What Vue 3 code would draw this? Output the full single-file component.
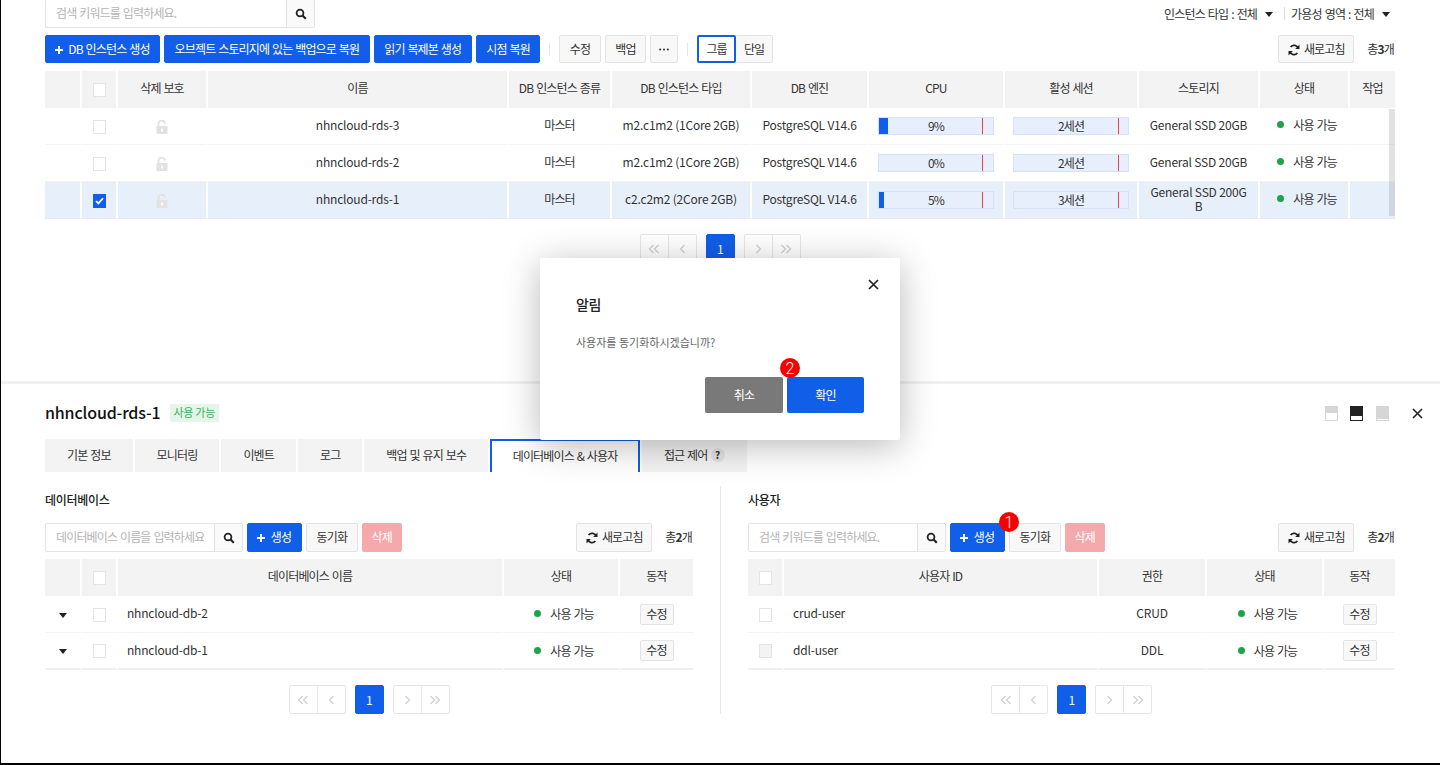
<script setup>
const topColumns = [
  { label: '', width: 37 },
  { label: '', width: 36, check: true },
  { label: '삭제 보호', width: 90 },
  { label: '이름', width: 301 },
  { label: 'DB 인스턴스 종류', width: 103 },
  { label: 'DB 인스턴스 타입', width: 140 },
  { label: 'DB 엔진', width: 117 },
  { label: 'CPU', width: 136 },
  { label: '활성 세션', width: 134 },
  { label: '스토리지', width: 121 },
  { label: '상태', width: 90 },
  { label: '작업', width: 45 },
]

const instances = [
  { name: 'nhncloud-rds-3', kind: '마스터', type: 'm2.c1m2 (1Core 2GB)', cpu: 9, sessions: '2세션', storage: 'General SSD 20GB' },
  { name: 'nhncloud-rds-2', kind: '마스터', type: 'm2.c1m2 (1Core 2GB)', cpu: 0, sessions: '2세션', storage: 'General SSD 20GB' },
  { name: 'nhncloud-rds-1', kind: '마스터', type: 'c2.c2m2 (2Core 2GB)', cpu: 5, sessions: '3세션', storage: 'General SSD 200GB', selected: true },
]

const tabs = ['기본 정보', '모니터링', '이벤트', '로그', '백업 및 유지 보수', '데이터베이스 & 사용자', '접근 제어']

const panels = [
  {
    title: '데이터베이스',
    placeholder: '데이터베이스 이름을 입력하세요.',
    expandable: true,
    columns: [
      { label: '', width: 37 },
      { label: '', width: 36, check: true },
      { label: '데이터베이스 이름', width: 386 },
      { label: '상태', width: 116 },
      { label: '동작', width: 73 },
    ],
    rows: [{ name: 'nhncloud-db-2' }, { name: 'nhncloud-db-1' }],
  },
  {
    title: '사용자',
    placeholder: '검색 키워드를 입력하세요.',
    expandable: false,
    columns: [
      { label: '', width: 36, check: true },
      { label: '사용자 ID', width: 315 },
      { label: '권한', width: 108 },
      { label: '상태', width: 117 },
      { label: '동작', width: 71 },
    ],
    rows: [
      { name: 'crud-user', perm: 'CRUD' },
      { name: 'ddl-user', perm: 'DDL', disabled: true },
    ],
  },
]
</script>

<template>
  <div class="page">
    <section class="top">
      <div class="filter-row">
        <div class="search search--top">
          <input class="search-input" placeholder="검색 키워드를 입력하세요." />
          <button class="search-btn">
            <svg width="12" height="12" viewBox="0 0 12 12"><circle cx="5" cy="5" r="3.4" fill="none" stroke="#222" stroke-width="1.8"/><path d="M7.5 7.5L10.8 10.8" stroke="#222" stroke-width="2.2"/></svg>
          </button>
        </div>
        <div class="filters">
          <span>인스턴스 타입 : 전체</span><i class="caret caret--filter"></i>
          <b class="filter-sep"></b>
          <span>가용성 영역 : 전체</span><i class="caret caret--filter"></i>
        </div>
      </div>

      <div class="toolbar">
        <button class="btn btn--blue btn--create">
          <svg width="8" height="8" viewBox="0 0 8 8"><path d="M4 0v8M0 4h8" stroke="#fff" stroke-width="2"/></svg>
          DB 인스턴스 생성
        </button>
        <button class="btn btn--blue">오브젝트 스토리지에 있는 백업으로 복원</button>
        <button class="btn btn--blue">읽기 복제본 생성</button>
        <button class="btn btn--blue">시점 복원</button>
        <b class="sep"></b>
        <button class="btn">수정</button>
        <button class="btn">백업</button>
        <button class="btn btn--more">
          <svg width="10" height="3" viewBox="0 0 10 3" fill="#333"><circle cx="1.2" cy="1.5" r="1"/><circle cx="5" cy="1.5" r="1"/><circle cx="8.8" cy="1.5" r="1"/></svg>
        </button>
        <b class="sep"></b>
        <div class="toggle">
          <button class="btn btn--on">그룹</button>
          <button class="btn btn--off">단일</button>
        </div>
        <div class="toolbar-end">
          <button class="btn btn--refresh">
            <svg class="refresh-icon" width="12" height="12" viewBox="0 0 12 12"><path d="M10.3 4.4A4.5 4.5 0 0 0 2.6 3M1.7 7.6A4.5 4.5 0 0 0 9.4 9" fill="none" stroke="#222" stroke-width="1.7"/><path d="M11.5 0.6V5H7.1zM0.5 11.4V7h4.4z" fill="#222"/></svg>
            새로고침
          </button>
          <span class="total">총<b>3</b>개</span>
        </div>
      </div>

      <div class="table-wrap">
        <table class="grid">
          <colgroup>
            <col v-for="(c, i) in topColumns" :key="i" :style="{ width: c.width + 'px' }" />
          </colgroup>
          <thead>
            <tr>
              <th v-for="(c, i) in topColumns" :key="i" :class="{ ctl: c.check }">
                <span v-if="c.check" class="check"></span>
                <template v-else>{{ c.label }}</template>
              </th>
            </tr>
          </thead>
          <tbody>
            <tr v-for="row in instances" :key="row.name" :class="{ selected: row.selected }">
              <td></td>
              <td class="ctl">
                <span class="check" :class="{ 'check--on': row.selected }">
                  <svg v-if="row.selected" width="9" height="8" viewBox="0 0 9 8"><path d="M1 4l2.4 2.4L8 1.2" fill="none" stroke="#fff" stroke-width="1.7"/></svg>
                </span>
              </td>
              <td class="ctl">
                <svg class="lock" width="12" height="14" viewBox="0 0 12 14"><path d="M2.5 6.5V3.7a3.2 3.2 0 0 1 6.4 0" fill="none" stroke="#e2e2e2" stroke-width="1.8"/><rect x="0.5" y="6" width="11" height="8" rx="0.8" fill="#e2e2e2"/><rect x="5.2" y="8.6" width="1.6" height="3" fill="#fff"/></svg>
              </td>
              <td class="latin">{{ row.name }}</td>
              <td>{{ row.kind }}</td>
              <td class="latin">{{ row.type }}</td>
              <td class="latin">PostgreSQL V14.6</td>
              <td class="bar-cell ctl">
                <div class="bar">
                  <div class="bar-fill" :style="{ width: row.cpu + '%' }"></div>
                  <div class="bar-limit"></div>
                  <span class="bar-text">{{ row.cpu }}%</span>
                </div>
              </td>
              <td class="bar-cell ctl">
                <div class="bar">
                  <div class="bar-limit"></div>
                  <span class="bar-text">{{ row.sessions }}</span>
                </div>
              </td>
              <td class="storage latin">{{ row.storage }}</td>
              <td class="status-cell">
                <span class="status"><i class="dot"></i>사용 가능</span>
              </td>
              <td></td>
            </tr>
          </tbody>
        </table>
        <div class="scrollbar"></div>
      </div>

      <div class="pager pager--top">
        <div class="pager-group">
          <button><svg width="12" height="10" viewBox="0 0 12 10"><path d="M5.5 1L1.5 5l4 4M10.5 1l-4 4 4 4" fill="none" stroke="#cfcfcf" stroke-width="1.2"/></svg></button>
          <button><svg width="7" height="10" viewBox="0 0 7 10"><path d="M5.5 1L1.5 5l4 4" fill="none" stroke="#cfcfcf" stroke-width="1.2"/></svg></button>
        </div>
        <button class="pager-current">1</button>
        <div class="pager-group">
          <button><svg width="7" height="10" viewBox="0 0 7 10"><path d="M1.5 1l4 4-4 4" fill="none" stroke="#cfcfcf" stroke-width="1.2"/></svg></button>
          <button><svg width="12" height="10" viewBox="0 0 12 10"><path d="M1.5 1l4 4-4 4M6.5 1l4 4-4 4" fill="none" stroke="#cfcfcf" stroke-width="1.2"/></svg></button>
        </div>
      </div>
    </section>

    <section class="detail">
      <header class="detail-head">
        <h2 class="detail-title">nhncloud-rds-1</h2>
        <span class="badge">사용 가능</span>
        <div class="detail-tools">
          <span class="layout-icon"><i style="height: 7px"></i></span>
          <span class="layout-icon layout-icon--on"><i style="height: 4px"></i></span>
          <span class="layout-icon"><i style="height: 1px"></i></span>
          <svg class="detail-close" width="11" height="11" viewBox="0 0 11 11"><path d="M1 1l9 9M10 1l-9 9" stroke="#222" stroke-width="1.6"/></svg>
        </div>
      </header>

      <nav class="tabs">
        <button v-for="t in tabs" :key="t" class="tab" :class="{ 'tab--on': t === '데이터베이스 & 사용자' }">
          {{ t }}
          <span v-if="t === '접근 제어'" class="help">?</span>
        </button>
      </nav>

      <div class="panels">
        <div v-for="(p, pi) in panels" :key="p.title" class="panel">
          <h3 class="panel-title">{{ p.title }}</h3>
          <div class="toolbar toolbar--panel">
            <div class="search search--panel">
              <input class="search-input" :placeholder="p.placeholder" />
              <button class="search-btn">
                <svg width="12" height="12" viewBox="0 0 12 12"><circle cx="5" cy="5" r="3.4" fill="none" stroke="#222" stroke-width="1.8"/><path d="M7.5 7.5L10.8 10.8" stroke="#222" stroke-width="2.2"/></svg>
              </button>
            </div>
            <button class="btn btn--blue btn--create btn--small">
              <svg width="8" height="8" viewBox="0 0 8 8"><path d="M4 0v8M0 4h8" stroke="#fff" stroke-width="2"/></svg>
              생성
              <span v-if="pi === 1" class="step step--one">1</span>
            </button>
            <button class="btn">동기화</button>
            <button class="btn btn--danger">삭제</button>
            <div class="toolbar-end">
              <button class="btn btn--refresh">
                <svg class="refresh-icon" width="12" height="12" viewBox="0 0 12 12"><path d="M10.3 4.4A4.5 4.5 0 0 0 2.6 3M1.7 7.6A4.5 4.5 0 0 0 9.4 9" fill="none" stroke="#222" stroke-width="1.7"/><path d="M11.5 0.6V5H7.1zM0.5 11.4V7h4.4z" fill="#222"/></svg>
                새로고침
              </button>
              <span class="total">총<b>2</b>개</span>
            </div>
          </div>

          <table class="grid grid--panel">
            <colgroup>
              <col v-for="(c, i) in p.columns" :key="i" :style="{ width: c.width + 'px' }" />
            </colgroup>
            <thead>
              <tr>
                <th v-for="(c, i) in p.columns" :key="i" :class="{ ctl: c.check }">
                  <span v-if="c.check" class="check"></span>
                  <template v-else>{{ c.label }}</template>
                </th>
              </tr>
            </thead>
            <tbody>
              <tr v-for="row in p.rows" :key="row.name">
                <td v-if="p.expandable" class="ctl"><i class="caret caret--row"></i></td>
                <td class="ctl"><span class="check" :class="{ 'check--off': row.disabled }"></span></td>
                <td class="left latin">{{ row.name }}</td>
                <td v-if="!p.expandable" class="latin">{{ row.perm }}</td>
                <td><span class="status"><i class="dot"></i>사용 가능</span></td>
                <td class="ctl"><button class="btn btn--edit">수정</button></td>
              </tr>
            </tbody>
          </table>

          <div class="pager">
            <div class="pager-group">
              <button><svg width="12" height="10" viewBox="0 0 12 10"><path d="M5.5 1L1.5 5l4 4M10.5 1l-4 4 4 4" fill="none" stroke="#cfcfcf" stroke-width="1.2"/></svg></button>
              <button><svg width="7" height="10" viewBox="0 0 7 10"><path d="M5.5 1L1.5 5l4 4" fill="none" stroke="#cfcfcf" stroke-width="1.2"/></svg></button>
            </div>
            <button class="pager-current">1</button>
            <div class="pager-group">
              <button><svg width="7" height="10" viewBox="0 0 7 10"><path d="M1.5 1l4 4-4 4" fill="none" stroke="#cfcfcf" stroke-width="1.2"/></svg></button>
              <button><svg width="12" height="10" viewBox="0 0 12 10"><path d="M1.5 1l4 4-4 4M6.5 1l4 4-4 4" fill="none" stroke="#cfcfcf" stroke-width="1.2"/></svg></button>
            </div>
          </div>
        </div>
      </div>
    </section>

    <div class="modal">
      <svg class="modal-close" width="11" height="11" viewBox="0 0 11 11"><path d="M1 1l9 9M10 1l-9 9" stroke="#222" stroke-width="1.7"/></svg>
      <h4 class="modal-title">알림</h4>
      <p class="modal-text">사용자를 동기화하시겠습니까?</p>
      <div class="modal-actions">
        <button class="modal-btn modal-btn--cancel">취소</button>
        <button class="modal-btn modal-btn--ok">
          확인
          <span class="step step--two">2</span>
        </button>
      </div>
    </div>
  </div>
</template>

<style scoped>
.page {
  position: relative;
  box-sizing: border-box;
  height: 765px;
  overflow: hidden;
  border-left: 1px solid #000;
  border-bottom: 2px solid #000;
  background: #fff;
  color: #333;
  font-family: "Noto Sans CJK KR", sans-serif;
  font-size: 12px;
  letter-spacing: -0.85px;
  word-spacing: 1px;
}
button {
  font-family: inherit;
  letter-spacing: inherit;
  word-spacing: inherit;
  cursor: pointer;
}

/* top list */
.top {
  box-sizing: border-box;
  height: 381px;
  padding: 0 45px 0 44px;
  margin-bottom: 3px;
}
.filter-row {
  display: flex;
  justify-content: space-between;
  height: 27px;
}
.search {
  display: flex;
  box-sizing: border-box;
  height: 29px;
  border: 1px solid #e3e3e3;
  border-radius: 2px;
  background: #fff;
}
.search--top {
  width: 270px;
  margin-top: -1px;
}
.search--panel {
  width: 198px;
}
.search-input {
  flex: 1;
  min-width: 0;
  box-sizing: border-box;
  border: 0;
  outline: 0;
  padding: 0 10px 2px;
  font-family: inherit;
  font-size: 12px;
  letter-spacing: inherit;
  word-spacing: inherit;
  background: transparent;
}
.search-input::placeholder {
  color: #b4b4b4;
}
.search-btn {
  width: 28px;
  flex: none;
  padding: 0;
  border: 0;
  border-left: 1px solid #e3e3e3;
  background: #fafafa;
  display: flex;
  align-items: center;
  justify-content: center;
}
.filters {
  display: flex;
  align-items: center;
  height: 26px;
  margin-right: 5px;
  letter-spacing: -0.8px;
  color: #333;
}
.filter-sep {
  width: 1px;
  height: 13px;
  margin: 0 6px 0 11px;
  background: #ddd;
}
.caret {
  display: inline-block;
  width: 0;
  height: 0;
  border-left: 4px solid transparent;
  border-right: 4px solid transparent;
  border-top: 5px solid #222;
}
.caret--filter {
  margin-left: 8px;
  margin-top: 2px;
}
.caret--row {
  position: relative;
  top: -1px;
  vertical-align: middle;
}

.toolbar {
  display: flex;
  align-items: center;
  gap: 4px;
  height: 28px;
  margin-top: 8px;
}
.toolbar--panel {
  height: 29px;
  margin-top: 0;
}
.toolbar-end {
  margin-left: auto;
  display: flex;
  align-items: center;
  gap: 13px;
  height: 100%;
}
.btn {
  box-sizing: border-box;
  height: 100%;
  padding: 0 9.5px 2px;
  border: 1px solid #e3e3e3;
  border-radius: 2px;
  background: #f8f8f8;
  color: #333;
  font-size: 12px;
  white-space: nowrap;
  position: relative;
}
.btn--blue {
  border-color: #115ee8;
  background: #115ee8;
  color: #fff;
}
.btn--create svg {
  margin-right: 3px;
  margin-left: -1px;
}
.btn--small {
  width: 55px;
  padding: 0 0 2px;
}
.btn--danger {
  border-color: #f4a9ad;
  background: #f4a9ad;
  color: #fff;
  padding: 0 9px 2px;
}
.btn--more {
  display: inline-flex;
  align-items: center;
  justify-content: center;
  width: 28px;
  padding: 0;
}
.btn--refresh {
  width: 76px;
  padding: 0 0 2px;
}
.refresh-icon {
  vertical-align: -2px;
  margin-right: 1px;
}
.sep {
  width: 1px;
  height: 13px;
  margin: 0 5px;
  background: #e4e4e4;
}
.toggle {
  display: flex;
  height: 100%;
}
.btn--on {
  width: 39px;
  padding: 0 0 2px;
  border: 2px solid #115ee8;
  background: #fff;
}
.btn--off {
  width: 37px;
  padding: 0 0 2px;
  border-left: 0;
}
.total {
  white-space: nowrap;
  padding: 0 1px 2px 0;
  color: #333;
}
.total b {
  font-weight: 700;
}

/* tables */
.table-wrap {
  position: relative;
  margin-top: 8px;
}
.grid {
  width: 100%;
  table-layout: fixed;
  border-collapse: separate;
  border-spacing: 0;
}
.grid th,
.grid td {
  box-sizing: border-box;
  height: 37px;
  padding: 0 0 3px;
  font-weight: 400;
  text-align: center;
  border-right: 2px solid #fff;
}
.grid th {
  padding-bottom: 4px;
  background: #f3f3f3;
}
.grid td {
  border-bottom: 1px solid #f3f3f3;
}
.grid th:last-child,
.grid td:last-child {
  border-right: 0;
}
.grid .ctl {
  padding: 0;
}
.grid .latin {
  letter-spacing: -0.2px;
  word-spacing: 0;
}
.grid tr.selected td {
  background: #e7effb;
  border-bottom-color: #e4e9f2;
}
.grid--panel tbody tr:last-child td {
  border-bottom: 2px solid #f0f0f0;
}
.grid td.left {
  text-align: left;
  padding-left: 9px;
}
.check {
  position: relative;
  top: -1px;
  display: inline-flex;
  align-items: center;
  justify-content: center;
  box-sizing: border-box;
  width: 13px;
  height: 14px;
  vertical-align: middle;
  border: 1px solid #e4e4e4;
  background: #fff;
}
.check--on {
  border-color: #115ee8;
  background: #115ee8;
}
.check--off {
  background: #f3f3f3;
}
.lock {
  vertical-align: middle;
  margin-top: -3px;
}
.grid .bar-cell {
  padding: 0 9px;
}
.grid .bar-cell + .bar-cell {
  padding: 0 8px;
}
.bar {
  position: relative;
  box-sizing: border-box;
  height: 18px;
  line-height: 15px;
  border: 1px solid #d3e1fb;
  background: #e7effc;
  overflow: hidden;
}
.bar-fill {
  position: absolute;
  left: -1px;
  top: -1px;
  bottom: -1px;
  background: #115ee8;
}
.bar-limit {
  position: absolute;
  right: 10px;
  top: -1px;
  bottom: -1px;
  width: 1px;
  background: #e8424a;
}
.bar-cell + .bar-cell .bar-limit {
  right: 9px;
}
.bar-text {
  position: relative;
  display: block;
}
.grid .storage {
  padding: 0 9px 2px;
  line-height: 14px;
  word-break: break-all;
}
.grid .status-cell {
  padding-bottom: 6px;
}
.status {
  display: inline-flex;
  align-items: center;
  margin-left: 6px;
  white-space: nowrap;
}
.dot {
  width: 7px;
  height: 7px;
  margin-right: 9px;
  border-radius: 50%;
  background: #1fa24a;
}
.btn--edit {
  width: 34px;
  height: 21px;
  padding: 0 0 2px;
  vertical-align: middle;
}
.scrollbar {
  position: absolute;
  right: 0;
  top: 38px;
  width: 6px;
  height: 107px;
  background: rgba(150, 150, 150, 0.28);
}

/* pagination */
.pager {
  display: flex;
  justify-content: center;
  gap: 9px;
  height: 29px;
  margin-top: 15px;
}
.pager button {
  box-sizing: border-box;
  width: 29px;
  height: 100%;
  padding: 0;
  border: 1px solid #e6e6e6;
  background: #fff;
  display: flex;
  align-items: center;
  justify-content: center;
}
.pager-group {
  display: flex;
}
.pager-group button:first-child {
  border-radius: 2px 0 0 2px;
}
.pager-group button:last-child {
  margin-left: -1px;
  border-radius: 0 2px 2px 0;
}
.pager .pager-current {
  border-color: #115ee8;
  border-radius: 2px;
  background: #115ee8;
  color: #fff;
  font-size: 12px;
}

/* detail */
.detail {
  box-sizing: border-box;
  border-top: 3px solid #f0f0f0;
  margin-top: -3px;
  padding: 20px 45px 0 44px;
}
.detail-head {
  display: flex;
  align-items: center;
  height: 18px;
}
.detail-title {
  margin: 0 0 2px;
  font-size: 16px;
  font-weight: 500;
  letter-spacing: -0.15px;
  color: #111;
}
.badge {
  margin-left: 9px;
  padding: 0 4px;
  height: 18px;
  line-height: 16px;
  font-size: 11px;
  letter-spacing: -0.3px;
  word-spacing: 0;
  color: #3bb15c;
  background: #e5f5e9;
}
.detail-tools {
  display: flex;
  align-items: center;
  gap: 12.5px;
  margin-left: auto;
  margin-right: -28px;
}
.layout-icon {
  display: flex;
  align-items: flex-end;
  box-sizing: border-box;
  width: 13px;
  height: 15px;
  padding: 1px;
  background: #d6d6d6;
}
.layout-icon i {
  display: block;
  width: 100%;
  background: #fff;
}
.layout-icon--on {
  background: #222;
}
.detail-close {
  margin-left: 11px;
}
.tabs {
  display: flex;
  gap: 2px;
  height: 33px;
  margin-top: 17px;
}
.tab {
  box-sizing: border-box;
  height: 100%;
  padding: 0 22px 2px;
  border: 0;
  background: #f3f3f3;
  color: #333;
  font-size: 12px;
  white-space: nowrap;
  display: flex;
  align-items: center;
}
.tab--on {
  padding: 0 20.5px 2px;
  border: 2px solid #115ee8;
  border-bottom: 0;
  background: #fff;
}
.help {
  display: inline-flex;
  align-items: center;
  justify-content: center;
  width: 14px;
  height: 14px;
  margin-left: 3px;
  border-radius: 50%;
  background: #e4e4e4;
  font-size: 10px;
  font-weight: 700;
  letter-spacing: 0;
}
.panels {
  display: grid;
  grid-template-columns: 648px 647px;
  column-gap: 55px;
  margin-top: 14px;
  position: relative;
}
.panels::before {
  content: "";
  position: absolute;
  left: 675px;
  top: 0;
  bottom: 0;
  width: 1px;
  background: #e8e8e8;
}
.panel-title {
  margin: 0;
  height: 37px;
  line-height: 28px;
  font-size: 12px;
  font-weight: 500;
  letter-spacing: -0.3px;
  color: #222;
}
.grid--panel {
  margin-top: 7px;
}

/* confirm dialog */
.modal {
  position: absolute;
  left: 539px;
  top: 258px;
  box-sizing: border-box;
  width: 360px;
  height: 182px;
  padding: 36px 36px 27px;
  background: #fff;
  border-radius: 2px;
  box-shadow: 0 6px 36px rgba(0, 0, 0, 0.28);
}
.modal-close {
  position: absolute;
  right: 21px;
  top: 21px;
}
.modal-title {
  margin: 0;
  height: 20px;
  line-height: 20px;
  font-size: 14px;
  font-weight: 500;
  letter-spacing: -0.3px;
  color: #222;
}
.modal-text {
  margin: 20px 0 0;
  line-height: 16px;
  font-size: 11px;
  letter-spacing: 0;
  word-spacing: 0;
  color: #666;
}
.modal-actions {
  display: flex;
  justify-content: flex-end;
  gap: 4px;
  margin-top: 27px;
}
.modal-btn {
  position: relative;
  width: 78px;
  height: 36px;
  padding: 0 0 2px;
  border: 0;
  border-radius: 2px;
  color: #fff;
  font-size: 12px;
}
.modal-btn--ok {
  width: 77px;
  background: #115ee8;
}
.modal-btn--cancel {
  background: #797979;
}
.step {
  position: absolute;
  z-index: 1;
  display: flex;
  align-items: center;
  justify-content: center;
  width: 20px;
  height: 20px;
  border-radius: 50%;
  background: #f80000;
  color: #fff;
  font-family: Roboto, sans-serif;
  font-size: 16px;
  font-weight: 300;
  letter-spacing: 0;
}
.step--one {
  left: 48px;
  top: -12px;
}
.step--two {
  left: -7px;
  top: -19px;
}
</style>

<style>
html,
body {
  margin: 0;
  overflow: hidden;
}
</style>
